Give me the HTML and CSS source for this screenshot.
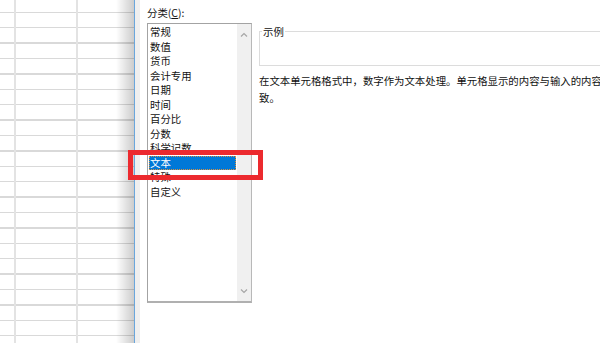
FILE: index.html
```html
<!DOCTYPE html>
<html lang="zh-CN">
<head>
    <meta charset="UTF-8">
    <meta name="viewport" content="width=device-width, initial-scale=1.0">
    <title>设置单元格格式</title>
    <link rel="stylesheet" href="styles.css">
</head>
<body>

<div class="sheet"></div>
<div class="split"></div>

<div class="dialog">
    <div class="category">
        <div class="label">分类(<u>C</u>):</div>
        <div class="listbox">
            <ul class="items">
                <li>常规</li>
                <li>数值</li>
                <li>货币</li>
                <li>会计专用</li>
                <li>日期</li>
                <li>时间</li>
                <li>百分比</li>
                <li>分数</li>
                <li>科学记数</li>
                <li class="selected">文本</li>
                <li>特殊</li>
                <li>自定义</li>
            </ul>
            <div class="scrollbar">
                <svg class="arrow" width="8" height="5" viewBox="0 0 8 5"><polyline points="1,4.5 4,1.5 7,4.5" fill="none" stroke="#a6a6a6" stroke-width="1.2"/></svg>
                <svg class="arrow" width="8" height="5" viewBox="0 0 8 5"><polyline points="1,0.5 4,3.5 7,0.5" fill="none" stroke="#a6a6a6" stroke-width="1.2"/></svg>
            </div>
        </div>
    </div>

    <div class="detail">
        <fieldset class="sample">
            <legend>示例</legend>
            <div class="sample-body"></div>
        </fieldset>
        <p class="desc">在文本单元格格式中，数字作为文本处理。单元格显示的内容与输入的内容完全一致。</p>
    </div>
</div>

<!-- annotation box -->
<div class="mark"></div>

</body>
</html>
```

FILE: styles.css
```css
html, body {
    margin: 0;
    padding: 0;
}

body {
    position: relative;
    width: 600px;
    height: 343px;
    overflow: hidden;
    display: flex;
    background-color: #fff;
    font-family: "Noto Sans CJK SC", "Noto Sans", sans-serif;
    font-size: 10.4px;
    color: #111;
}

.sheet {
    width: 134px;
    height: 100%;
    flex-shrink: 0;
    background-color: #fff;
    background-image:
        linear-gradient(to right, rgba(0, 0, 0, 0) 116px, rgba(0, 0, 0, 0.2) 134px),
        linear-gradient(to right, transparent 14px, #e3e3e3 14px, #e3e3e3 16px, transparent 16px),
        linear-gradient(to right, transparent 76px, #e3e3e3 76px, #e3e3e3 78px, transparent 78px),
        repeating-linear-gradient(to bottom, #fff 0, #fff 11.6px, #d9d9d9 11.6px, #d9d9d9 13px, #fff 13px, #fff 15.4px);
}

.split {
    width: 1px;
    height: 100%;
    flex-shrink: 0;
    background-color: #6aa6dc;
    border-right: 5px solid #efefef;
}

.dialog {
    display: flex;
    padding: 6px 0 0 7px;
}

.category {
    width: 105px;
    flex-shrink: 0;
}

.label {
    line-height: 14px;
    height: 14px;
    margin-bottom: 3px;
}

.listbox {
    display: flex;
    height: 280px;
    box-sizing: border-box;
    border: 1px solid #a3a3a3;
    border-right-color: #b8b8b8;
    border-bottom: 2px solid #b0b0b0;
}

.items {
    flex: 1;
    list-style: none;
    margin: 0;
    padding: 1px 0 0 0;
}

.items li {
    margin: 0 1px;
    padding-left: 1px;
    height: 14.5px;
    line-height: 14.5px;
    white-space: nowrap;
}

.items li.selected {
    background-color: #0078d7;
    color: #fff;
    outline: 1px dotted #d9913f;
    outline-offset: -1px;
}

.scrollbar {
    width: 14px;
    background-color: #f0f0f0;
    display: flex;
    flex-direction: column;
    justify-content: space-between;
    align-items: center;
    padding: 8px 0 7px;
}

.arrow {
    display: block;
}

.detail {
    flex-shrink: 0;
    width: 420px;
    margin-left: 7px;
    padding-top: 18.5px;
}

.sample {
    margin: 0;
    padding: 0;
    min-inline-size: 0;
    border: 1px solid #dcdcdc;
}

.sample legend {
    padding: 0 1px;
    margin-left: 2px;
    line-height: 13px;
}

.sample-body {
    height: 27px;
}

.desc {
    margin: 6px 0 0 0;
    width: 376px;
    line-height: 17.5px;
}

.mark {
    position: absolute;
    left: 128px;
    top: 150px;
    width: 135px;
    height: 30px;
    box-sizing: border-box;
    border: 5px solid #ec2a2f;
}
```
